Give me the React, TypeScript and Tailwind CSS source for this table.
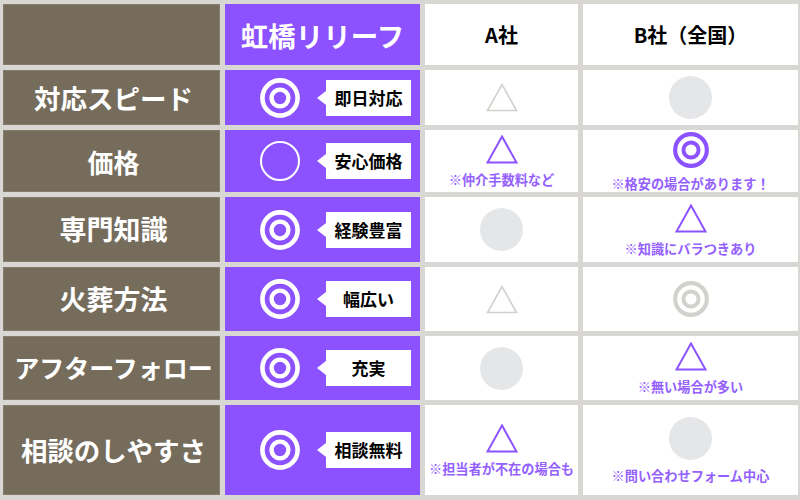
import { ReactNode } from "react";

const PURPLE = "#8c52ff";
const GRAY = "#d3d1cd";

type Mark = "double" | "single" | "triangle" | "dot";
type Tone = "purple" | "gray";

function DoubleCircle({ size = 40, color = "#ffffff" }: { size?: number; color?: string }) {
  return (
    <svg width={size} height={size} viewBox="0 0 40 40">
      <circle cx="20" cy="20" r="17.6" fill="none" stroke={color} strokeWidth="4.6" />
      <circle cx="20" cy="20" r="8.4" fill="none" stroke={color} strokeWidth="4.4" />
    </svg>
  );
}

function SingleCircle() {
  return (
    <svg width="40" height="40" viewBox="0 0 40 40">
      <circle cx="20" cy="20" r="19" fill="none" stroke="#ffffff" strokeWidth="2" />
    </svg>
  );
}

function Triangle({ color, width = 2 }: { color: string; width?: number }) {
  return (
    <svg width="32" height="29" viewBox="0 0 32 29">
      <polygon points="16,1.5 30.5,27.5 1.5,27.5" fill="none" stroke={color} strokeWidth={width} strokeLinejoin="miter" />
    </svg>
  );
}

function Dot() {
  return <div className="h-[43px] w-[43px] rounded-full bg-[#e5e6e8]" />;
}

function Symbol({ mark, tone }: { mark: Mark; tone: Tone }) {
  if (mark === "dot") return <Dot />;
  if (mark === "triangle")
    return tone === "purple" ? <Triangle color={PURPLE} /> : <Triangle color={GRAY} width={1.6} />;
  if (mark === "double") return <DoubleCircle size={36} color={tone === "purple" ? PURPLE : GRAY} />;
  return <SingleCircle />;
}

type Other = { mark: Mark; tone: Tone; note?: string };

type Row = {
  label: string;
  labelSize: string;
  ours: "double" | "single";
  tag: string;
  a: Other;
  b: Other;
};

const rows: Row[] = [
  {
    label: "対応スピード",
    labelSize: "text-[26.5px]",
    ours: "double",
    tag: "即日対応",
    a: { mark: "triangle", tone: "gray" },
    b: { mark: "dot", tone: "gray" },
  },
  {
    label: "価格",
    labelSize: "text-[26px]",
    ours: "single",
    tag: "安心価格",
    a: { mark: "triangle", tone: "purple", note: "※仲介手数料など" },
    b: { mark: "double", tone: "purple", note: "※格安の場合があります！" },
  },
  {
    label: "専門知識",
    labelSize: "text-[27px]",
    ours: "double",
    tag: "経験豊富",
    a: { mark: "dot", tone: "gray" },
    b: { mark: "triangle", tone: "purple", note: "※知識にバラつきあり" },
  },
  {
    label: "火葬方法",
    labelSize: "text-[27px]",
    ours: "double",
    tag: "幅広い",
    a: { mark: "triangle", tone: "gray" },
    b: { mark: "double", tone: "gray" },
  },
  {
    label: "アフターフォロー",
    labelSize: "text-[25px]",
    ours: "double",
    tag: "充実",
    a: { mark: "dot", tone: "gray" },
    b: { mark: "triangle", tone: "purple", note: "※無い場合が多い" },
  },
  {
    label: "相談のしやすさ",
    labelSize: "text-[26.5px]",
    ours: "double",
    tag: "相談無料",
    a: { mark: "triangle", tone: "purple", note: "※担当者が不在の場合も" },
    b: { mark: "dot", tone: "gray", note: "※問い合わせフォーム中心" },
  },
];

function Cell({ className, children }: { className: string; children?: ReactNode }) {
  return <div className={`flex items-center justify-center ${className}`}>{children}</div>;
}

function OtherCell({ item }: { item: Other }) {
  return (
    <Cell className="flex-col gap-[9px] bg-white">
      <Symbol mark={item.mark} tone={item.tone} />
      {item.note && (
        <span className="text-[13.2px] leading-none font-bold whitespace-nowrap text-[#9461ff]">
          {item.note}
        </span>
      )}
    </Cell>
  );
}

export default function App() {
  return (
    <div
      className="grid h-[500px] w-[800px] grid-cols-[217px_195px_153px_215px] grid-rows-[61px_55px_62px_65px_64px_64px_90px] gap-[5px] bg-[#d9d7d3] pt-[4px] pl-[3px]"
      style={{ fontFamily: '"Noto Sans CJK JP", "Noto Sans", sans-serif' }}
    >
      <Cell className="border border-[#857c6c] bg-[#756c5c]" />
      <Cell className="bg-[#8c52ff] pt-[2px] text-[27.5px] font-bold text-white">虹橋リリーフ</Cell>
      <Cell className="bg-white text-[20px] font-bold text-black">A社</Cell>
      <Cell className="bg-white text-[20px] font-bold text-black">B社（全国）</Cell>

      {rows.map((row) => (
        <div key={row.label} className="contents">
          <Cell className={`border border-[#857c6c] bg-[#756c5c] pl-[4px] font-bold whitespace-nowrap text-white ${row.labelSize}`}>
            {row.label}
          </Cell>
          <div className="flex items-center bg-[#8c52ff] pr-[9px] pl-[35px]">
            {row.ours === "double" ? <DoubleCircle /> : <SingleCircle />}
            <div className="ml-auto flex items-center">
              <div className="h-0 w-0 border-y-[7px] border-r-[9px] border-y-transparent border-r-white" />
              <div className="flex h-[36px] w-[85px] items-center justify-center bg-white text-[17px] font-bold text-black">
                {row.tag}
              </div>
            </div>
          </div>
          <OtherCell item={row.a} />
          <OtherCell item={row.b} />
        </div>
      ))}
    </div>
  );
}
